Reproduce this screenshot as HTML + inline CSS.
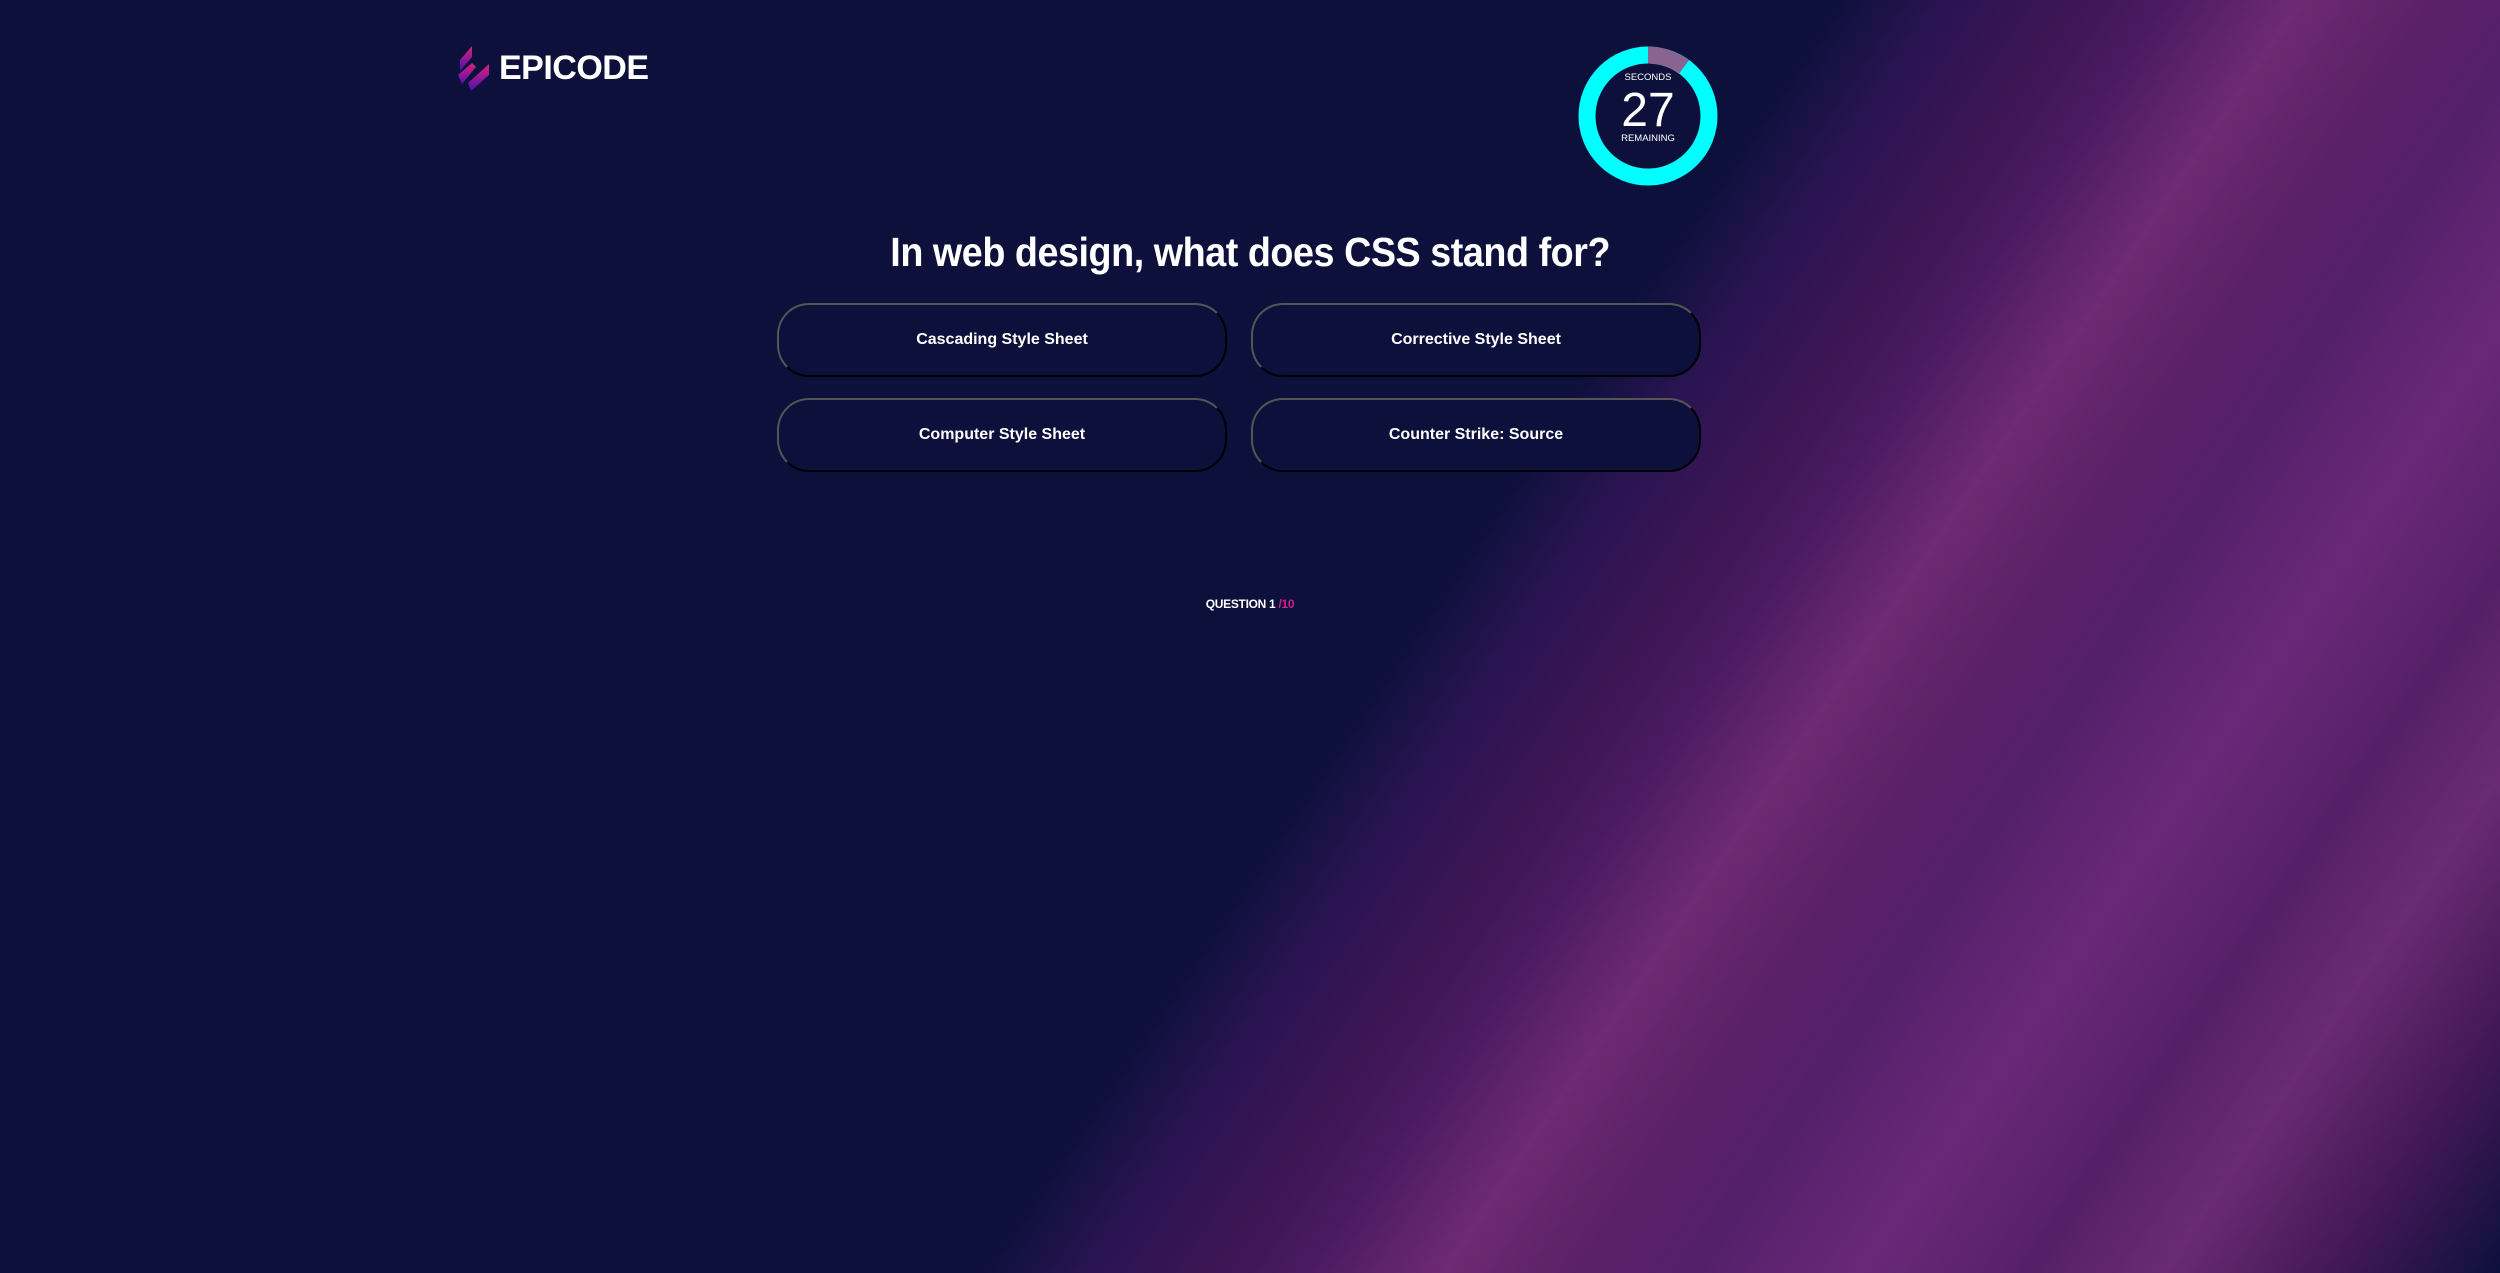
<!DOCTYPE html>
<html><head><meta charset="utf-8"><style>
html,body{margin:0;padding:0}
body{width:2500px;height:1273px;overflow:hidden;position:relative;font-family:"Liberation Sans",Arial,sans-serif;color:#fff;
background:linear-gradient(124deg,#0c103b 0%,#0c103b 54.5%,#2a1452 58%,#3c1555 61.5%,#4a1a60 64.5%,#6e2a74 68.5%,#5c2168 72%,#54206a 76%,#6a2878 81%,#552067 86%,#6a2a74 90%,#431857 95%,#0d103b 100%);}
.abs{position:absolute}
.title{position:absolute;left:0;width:2500px;top:224px;text-align:center;font-weight:bold;font-size:41px;line-height:56px;letter-spacing:-0.5px}
.title span{display:inline-block;transform:scaleX(0.92);transform-origin:center}
.btn{position:absolute;width:446px;height:70px;border-radius:32px;border:2px solid;border-color:#555 #000 #000 #555;background:#0c103b;display:flex;align-items:center;justify-content:center;font-weight:bold;font-size:16px}
</style></head><body>
<svg class="abs" style="left:440px;top:40px" width="60" height="60" viewBox="0 0 60 60">
<defs><linearGradient id="g" x1="0" y1="0" x2="0" y2="1"><stop offset="0" stop-color="#e0207a"/><stop offset="1" stop-color="#4a10b0"/></linearGradient></defs>
<polygon points="20,20 32,6 32,17 20,31" fill="url(#g)"/>
<polygon points="18,35 32,23 36,27 22,44" fill="url(#g)"/>
<polygon points="28,43 49,24 49,35 31,51" fill="url(#g)"/>
</svg>
<div class="abs" style="left:499px;top:49px;font-size:34px;font-weight:bold;letter-spacing:-0.5px">EPICODE</div>

<svg class="abs" style="left:1578px;top:46px" width="140" height="140" viewBox="0 0 140 140">
<circle cx="70" cy="70" r="61" fill="none" stroke="#00ffff" stroke-width="17"/>
<path d="M70 9 A61 61 0 0 1 106 21" fill="none" stroke="#8a6490" stroke-width="17"/>
<text x="70" y="34" text-anchor="middle" font-family="Liberation Sans" font-size="9.5" fill="#fff">SECONDS</text>
<text x="70" y="80" text-anchor="middle" font-family="Liberation Sans" font-size="48" fill="#fff">27</text>
<text x="70" y="95" text-anchor="middle" font-family="Liberation Sans" font-size="9.5" fill="#fff">REMAINING</text>
</svg>

<div class="title"><span>In web design, what does CSS stand for?</span></div>

<div class="btn" style="left:777px;top:303px">Cascading Style Sheet</div>
<div class="btn" style="left:1251px;top:303px">Corrective Style Sheet</div>
<div class="btn" style="left:777px;top:398px">Computer Style Sheet</div>
<div class="btn" style="left:1251px;top:398px">Counter Strike: Source</div>

<div class="abs" style="left:0;width:2500px;top:597px;text-align:center;font-size:12px;font-weight:bold;letter-spacing:-0.3px">QUESTION 1 <span style="color:#d0208a">/10</span></div>
</body></html>
